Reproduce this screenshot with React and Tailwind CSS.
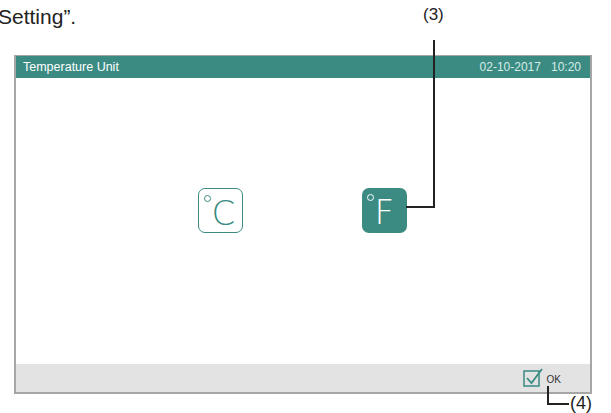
import React from 'react';

const CheckBoxIcon = () => (
  <svg width="20" height="20" viewBox="0 0 20 20" fill="none" className="block">
    <rect x="1" y="3" width="15" height="15" stroke="#3b8b83" strokeWidth="1.5" fill="none" />
    <path d="M4 10l4.5 5L19 1" stroke="#3b8b83" strokeWidth="1.8" fill="none" />
  </svg>
);

const UnitButton = ({ letter, active }) => (
  <div
    className={`w-[45px] h-[45px] rounded-[7px] flex items-start pt-[5px] pl-[5px] gap-[1px] ${
      active ? 'bg-[#3b8b83] text-white' : 'border border-[#3b8b83] text-[#3b8b83]'
    }`}
  >
    <span className={`w-[7px] h-[7px] rounded-full border-[1.3px] mt-[1px] ${active ? 'border-white' : 'border-[#3b8b83]'}`} />
    <span className="text-[34px] leading-none font-['DejaVu_Sans',sans-serif] font-extralight mt-[2px]">{letter}</span>
  </div>
);

const App = () => {
  return (
    <div className="relative w-[611px] h-[413px] bg-white overflow-hidden flex flex-col font-['Liberation_Sans',Arial,sans-serif]">
      <p className="ml-[-2px] mt-[4px] h-[46px] text-[21px] leading-[26px] text-[#222]">Setting”.</p>

      {/* device screen */}
      <div className="ml-[14px] mt-[5px] w-[578px] h-[339px] border-2 border-t border-[#a6a6a6] flex flex-col bg-white">
        <div className="h-[22px] bg-[#3b8b83] flex items-center justify-between pl-[7px] pr-[9px]">
          <span className="text-[12.5px] text-white">Temperature Unit</span>
          <span className="text-[12px] text-[#d7ebe8]">02-10-2017&nbsp;&nbsp;&nbsp;10:20</span>
        </div>

        <div className="flex-1 flex justify-center items-start gap-[119px] pt-[110px] pr-[2px]">
          <UnitButton letter="C" />
          <UnitButton letter="F" active />
        </div>

        <div className="h-[28px] bg-[#e3e3e4] flex items-center justify-end pr-[29px] gap-[4px]">
          <CheckBoxIcon />
          <span className="text-[10px] text-[#333] pt-[2px]">OK</span>
        </div>
      </div>

      {/* callout (3) */}
      <span className="absolute left-[423px] top-[6px] text-[17px] leading-none text-[#222]">(3)</span>
      <div className="absolute left-[433px] top-[40px] w-[2px] h-[168px] bg-[#222]" />
      <div className="absolute left-[406px] top-[206px] w-[29px] h-[2px] bg-[#222]" />

      {/* callout (4) */}
      <div className="absolute left-[547px] top-[386px] w-[2px] h-[19px] bg-[#222]" />
      <div className="absolute left-[547px] top-[403px] w-[22px] h-[2px] bg-[#222]" />
      <span className="absolute left-[570px] top-[394px] text-[18px] leading-none text-[#222]">(4)</span>
    </div>
  );
};

export default App;
